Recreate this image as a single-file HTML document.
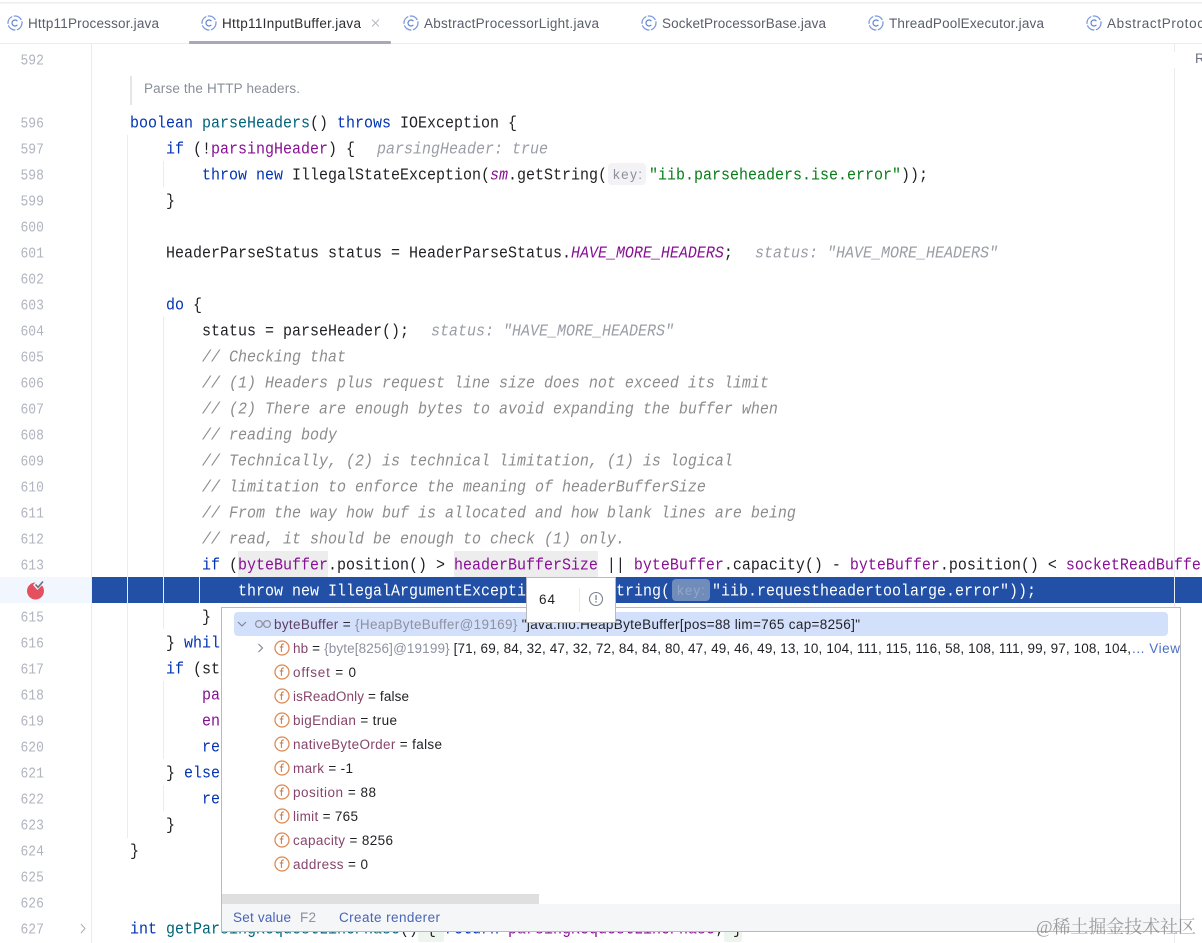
<!DOCTYPE html>
<html><head><meta charset="utf-8">
<style>
html,body{margin:0;padding:0;background:#fff;overflow:hidden}
svg{display:block}
text{white-space:pre}
.m{font-family:"Liberation Mono",monospace;font-size:15px;fill:#1f2024;transform-box:fill-box;transform-origin:center;transform:scaleY(1.13)}
.n{font-family:"Liberation Mono",monospace;font-size:13px;fill:#b0b4bf;transform-box:fill-box;transform-origin:center;transform:scaleY(1.12)}
.s{font-family:"Liberation Sans",sans-serif;font-size:13.5px}
.tab{fill:#5a5d6b}
.k{fill:#0033b3}
.fn{fill:#00627a}
.p{fill:#871094}
.i{font-style:italic}
.str{fill:#067d17}
.c{fill:#8c8c8c;font-style:italic}
.h{fill:#9a9da6;font-style:italic}
.nm{fill:#87446b}
.gr{fill:#8d91a0}
.v{fill:#1f2024}
</style></head>
<body>
<svg width="1202" height="943" viewBox="0 0 1202 943" xmlns="http://www.w3.org/2000/svg">
<defs>
<g id="ci" fill="none"><circle r="7" stroke="#7a9ae0" stroke-width="1.3" stroke-dasharray="9 1.5"/><path d="M2.4-1.8A3 3 0 1 0 2.4 1.8" stroke="#5f82cf" stroke-width="1.2"/></g>
<g id="fi" fill="none"><circle r="7" stroke="#dc8a52" stroke-width="1.3"/><path d="M2-3.900C.4-4.300-.6-3.400-.6-1.900V4M-2.200-1H1.500" stroke="#d07a40" stroke-width="1.1"/></g>
<clipPath id="tabs"><rect x="0" y="0" width="1202" height="43"/></clipPath>
</defs>
<rect width="1202" height="943" fill="#fff"/>

<!-- tab bar -->
<rect x="0" y="2" width="1202" height="1.5" fill="#ebecf0"/>
<rect x="0" y="43" width="1202" height="1" fill="#ebecf0"/>
<rect x="189" y="41" width="202" height="3" rx="1" fill="#a8a9b8"/>
<use href="#ci" x="15" y="23"/><use href="#ci" x="209" y="23"/><use href="#ci" x="411" y="23"/><use href="#ci" x="649" y="23"/><use href="#ci" x="876" y="23"/><use href="#ci" x="1094" y="23"/>
<g clip-path="url(#tabs)">
<text class="s tab" x="28" y="28" textLength="131">Http11Processor.java</text>
<text class="s" fill="#2b2d30" x="222" y="28" textLength="139">Http11InputBuffer.java</text>
<text class="s tab" x="424" y="28" textLength="175">AbstractProcessorLight.java</text>
<text class="s tab" x="662" y="28" textLength="164">SocketProcessorBase.java</text>
<text class="s tab" x="889" y="28" textLength="155">ThreadPoolExecutor.java</text>
<text class="s tab" x="1107" y="28" textLength="97">AbstractProtoc</text>
</g>
<path d="M372 19.500l7 7m0-7l-7 7" stroke="#b4b7c0" stroke-width="1" fill="none"/>

<!-- gutter -->
<rect x="0" y="577" width="92" height="26" fill="#f2f6fe"/>
<rect x="91" y="44" width="1" height="899" fill="#ebecf0"/>
<rect x="1174" y="44" width="1" height="8" fill="#ebecf0"/>
<rect x="1174" y="68" width="1" height="875" fill="#ebecf0"/>
<text class="s" fill="#6c707e" x="1195" y="63">R</text>

<!-- guides -->
<g fill="#ebecf0">
<rect x="127" y="135" width="1" height="703"/>
<rect x="163" y="161" width="1" height="26"/>
<rect x="163" y="317" width="1" height="312"/>
<rect x="163" y="681" width="1" height="78"/>
<rect x="163" y="785" width="1" height="26"/>
</g>
<text class="n" x="20.500" y="64">592</text>
<text class="n" x="20.500" y="127">596</text>
<text class="n" x="20.500" y="153">597</text>
<text class="n" x="20.500" y="179">598</text>
<text class="n" x="20.500" y="205">599</text>
<text class="n" x="20.500" y="231">600</text>
<text class="n" x="20.500" y="257">601</text>
<text class="n" x="20.500" y="283">602</text>
<text class="n" x="20.500" y="309">603</text>
<text class="n" x="20.500" y="335">604</text>
<text class="n" x="20.500" y="361">605</text>
<text class="n" x="20.500" y="387">606</text>
<text class="n" x="20.500" y="413">607</text>
<text class="n" x="20.500" y="439">608</text>
<text class="n" x="20.500" y="465">609</text>
<text class="n" x="20.500" y="491">610</text>
<text class="n" x="20.500" y="517">611</text>
<text class="n" x="20.500" y="543">612</text>
<text class="n" x="20.500" y="569">613</text>
<text class="n" x="20.500" y="621">615</text>
<text class="n" x="20.500" y="647">616</text>
<text class="n" x="20.500" y="673">617</text>
<text class="n" x="20.500" y="699">618</text>
<text class="n" x="20.500" y="725">619</text>
<text class="n" x="20.500" y="751">620</text>
<text class="n" x="20.500" y="777">621</text>
<text class="n" x="20.500" y="803">622</text>
<text class="n" x="20.500" y="829">623</text>
<text class="n" x="20.500" y="855">624</text>
<text class="n" x="20.500" y="881">625</text>
<text class="n" x="20.500" y="907">626</text>
<text class="n" x="20.500" y="933">627</text>
<path d="M81 924l4 4.500-4 4.500" fill="none" stroke="#a9adb8" stroke-width="1"/>

<!-- breakpoint -->
<circle cx="35.500" cy="591" r="8.500" fill="#e5505f"/>
<path d="M33 585l4.500 5 7.500-8v-2h-7l-3 3z" fill="#f2f6fe"/>
<path d="M35.500 584.500l2.500 2.800 5-5.800" fill="none" stroke="#6c707e" stroke-width="1.600"/>

<!-- doc comment -->
<rect x="130" y="76" width="2" height="29" fill="#e4e5e9"/>
<text class="s" fill="#8a8e99" x="144" y="93" textLength="156">Parse the HTTP headers.</text>

<!-- code -->
<text class="m" x="130" y="127"><tspan class="k">boolean</tspan> <tspan class="fn">parseHeaders</tspan>() <tspan class="k">throws</tspan> IOException {</text>
<text class="m" x="166" y="153"><tspan class="k">if</tspan> (!<tspan class="p">parsingHeader</tspan>) {</text>
<text class="m h" x="377" y="153">parsingHeader: true</text>
<text class="m" x="202" y="179"><tspan class="k">throw new</tspan> IllegalStateException(<tspan class="p i">sm</tspan>.getString(</text>
<rect x="608" y="163" width="38" height="22" rx="4" fill="#f3f3f5"/>
<text class="s" fill="#8d91a0" x="613" y="179" textLength="29">key:</text>
<text class="m" x="649" y="179"><tspan class="str">"iib.parseheaders.ise.error"</tspan>));</text>
<text class="m" x="166" y="205">}</text>
<text class="m" x="166" y="257">HeaderParseStatus status = HeaderParseStatus.<tspan class="p i">HAVE_MORE_HEADERS</tspan>;</text>
<text class="m h" x="755" y="257">status: "HAVE_MORE_HEADERS"</text>
<text class="m" x="166" y="309"><tspan class="k">do</tspan> {</text>
<text class="m" x="202" y="335">status = parseHeader();</text>
<text class="m h" x="431" y="335">status: "HAVE_MORE_HEADERS"</text>
<text class="m c" x="202" y="361">// Checking that</text>
<text class="m c" x="202" y="387">// (1) Headers plus request line size does not exceed its limit</text>
<text class="m c" x="202" y="413">// (2) There are enough bytes to avoid expanding the buffer when</text>
<text class="m c" x="202" y="439">// reading body</text>
<text class="m c" x="202" y="465">// Technically, (2) is technical limitation, (1) is logical</text>
<text class="m c" x="202" y="491">// limitation to enforce the meaning of headerBufferSize</text>
<text class="m c" x="202" y="517">// From the way how buf is allocated and how blank lines are being</text>
<text class="m c" x="202" y="543">// read, it should be enough to check (1) only.</text>
<rect x="238" y="551" width="90" height="26" fill="#ededed"/>
<rect x="454" y="551" width="144" height="26" fill="#ededed"/>
<text class="m" x="202" y="569"><tspan class="k">if</tspan> (<tspan class="p">byteBuffer</tspan>.position() &gt; <tspan class="p">headerBufferSize</tspan> || <tspan class="p">byteBuffer</tspan>.capacity() - <tspan class="p">byteBuffer</tspan>.position() &lt; <tspan class="p">socketReadBuffer</tspan></text>

<!-- current line -->
<rect x="92" y="577" width="1110" height="26" fill="#2150a6"/>
<g fill="#e9edf6"><rect x="127" y="577" width="1" height="26"/><rect x="163" y="577" width="1" height="26"/><rect x="199" y="577" width="1" height="26"/><rect x="1174" y="577" width="1" height="26"/></g>
<text class="m" x="238" y="595" style="fill:#fff">throw new IllegalArgumentException(sm.getString(</text>
<rect x="672" y="579" width="38" height="22" rx="4" fill="#6f8cbb"/>
<text class="s" fill="#93a6c6" x="677" y="595" textLength="28">key:</text>
<text class="m" x="712" y="595" style="fill:#fff">"iib.requestheadertoolarge.error"));</text>

<!-- code behind popup -->
<text class="m" x="202" y="621">}</text>
<text class="m" x="166" y="647">} <tspan class="k">while</tspan></text>
<text class="m" x="166" y="673"><tspan class="k">if</tspan> (status</text>
<text class="m p" x="202" y="699">parsingHeader</text>
<text class="m p" x="202" y="725">end</text>
<text class="m k" x="202" y="751">return</text>
<text class="m" x="166" y="777">} <tspan class="k">else</tspan></text>
<text class="m k" x="202" y="803">return</text>
<text class="m" x="166" y="829">}</text>
<text class="m" x="130" y="855">}</text>
<rect x="418" y="920" width="26" height="22" rx="2" fill="#eef5ee"/>
<rect x="724" y="920" width="18" height="22" rx="2" fill="#eef5ee"/>
<text class="m" x="130" y="933"><tspan class="k">int</tspan> <tspan class="fn">getParsingRequestLinePhase</tspan>() { <tspan class="k">return</tspan> <tspan class="p">parsingRequestLinePhase</tspan>; }</text>

<!-- popup -->
<rect x="221.500" y="607.500" width="959" height="324" fill="#fff" stroke="#b9babd"/>
<rect x="234" y="612" width="934" height="24" rx="4" fill="#d3e0fb"/>
<path d="M238 622l4 4 4-4" fill="none" stroke="#7d818e" stroke-width="1.100"/>
<g fill="none" stroke="#8f93a0" stroke-width="1.300"><circle cx="259" cy="624" r="3.400"/><circle cx="267" cy="624" r="3.400"/></g>
<text class="s" x="274" y="629" textLength="586"><tspan fill="#5d3f62">byteBuffer</tspan><tspan fill="#2b2d30"> = </tspan><tspan class="gr">{HeapByteBuffer@19169} </tspan><tspan fill="#1f2024">"java.nio.HeapByteBuffer[pos=88 lim=765 cap=8256]"</tspan></text>

<path d="M258.500 644l4 4-4 4" fill="none" stroke="#7d818e" stroke-width="1.100"/>
<use href="#fi" x="282" y="648"/>
<text class="s" x="293" y="653" textLength="838"><tspan class="nm">hb</tspan><tspan class="v"> = </tspan><tspan class="gr">{byte[8256]@19199} </tspan><tspan class="v">[71, 69, 84, 32, 47, 32, 72, 84, 84, 80, 47, 49, 46, 49, 13, 10, 104, 111, 115, 116, 58, 108, 111, 99, 97, 108, 104,</tspan></text>
<text class="s" fill="#4a6fc4" x="1132" y="653" textLength="48">... View</text>

<use href="#fi" x="282" y="672"/><text class="s" x="293" y="677" textLength="63"><tspan class="nm">offset</tspan><tspan class="v"> = 0</tspan></text>
<use href="#fi" x="282" y="696"/><text class="s" x="293" y="701" textLength="116"><tspan class="nm">isReadOnly</tspan><tspan class="v"> = false</tspan></text>
<use href="#fi" x="282" y="720"/><text class="s" x="293" y="725" textLength="104"><tspan class="nm">bigEndian</tspan><tspan class="v"> = true</tspan></text>
<use href="#fi" x="282" y="744"/><text class="s" x="293" y="749" textLength="149"><tspan class="nm">nativeByteOrder</tspan><tspan class="v"> = false</tspan></text>
<use href="#fi" x="282" y="768"/><text class="s" x="293" y="773" textLength="60"><tspan class="nm">mark</tspan><tspan class="v"> = -1</tspan></text>
<use href="#fi" x="282" y="792"/><text class="s" x="293" y="797" textLength="83"><tspan class="nm">position</tspan><tspan class="v"> = 88</tspan></text>
<use href="#fi" x="282" y="816"/><text class="s" x="293" y="821" textLength="65"><tspan class="nm">limit</tspan><tspan class="v"> = 765</tspan></text>
<use href="#fi" x="282" y="840"/><text class="s" x="293" y="845" textLength="100"><tspan class="nm">capacity</tspan><tspan class="v"> = 8256</tspan></text>
<use href="#fi" x="282" y="864"/><text class="s" x="293" y="869" textLength="75"><tspan class="nm">address</tspan><tspan class="v"> = 0</tspan></text>

<rect x="222" y="894" width="317" height="10" fill="#dfdfdf"/>
<rect x="222" y="904" width="958" height="27" fill="#f5f6f8"/>
<text class="s" fill="#4a64b5" x="233" y="922" textLength="58">Set value</text>
<text class="s" fill="#8d91a0" x="300" y="922" textLength="16">F2</text>
<text class="s" fill="#4a64b5" x="339" y="922" textLength="101">Create renderer</text>

<!-- value tooltip -->
<rect x="526.500" y="577.500" width="89" height="45" fill="#fff" stroke="#b9babd"/>
<text class="s" fill="#1f2024" x="539" y="604" textLength="16">64</text>
<rect x="579" y="588" width="1" height="24" fill="#ebecf0"/>
<circle cx="596" cy="599" r="6.500" fill="none" stroke="#7d818e" stroke-width="1.100"/>
<rect x="595.400" y="595" width="1.300" height="5" fill="#7d818e"/><rect x="595.400" y="601" width="1.300" height="1.500" fill="#7d818e"/>

<!-- watermark -->
<text x="1036" y="933" textLength="160" font-size="18" fill="#8d8d8d" opacity=".85" font-family="'Liberation Serif','Noto Serif CJK SC',serif">@稀土掘金技术社区</text>
</svg>
</body></html>
